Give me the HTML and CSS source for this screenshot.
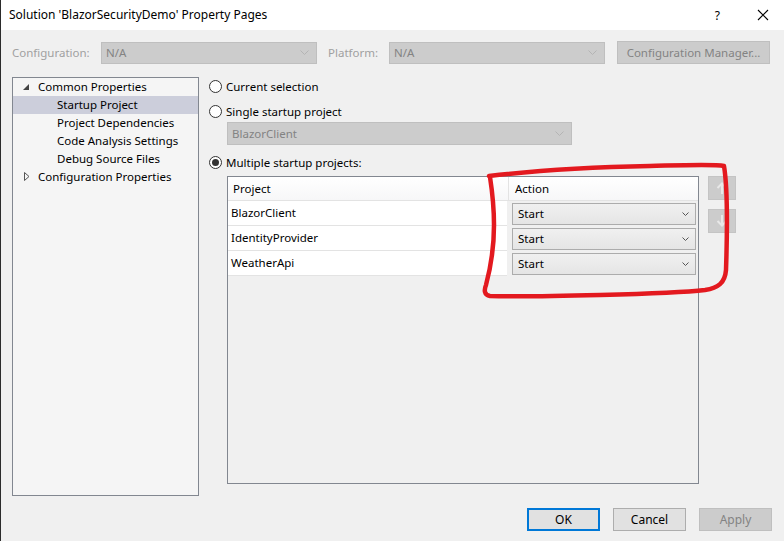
FILE: index.html
```html
<!DOCTYPE html>
<html>
<head>
<meta charset="utf-8">
<title>Property Pages</title>
<link rel="stylesheet" href="styles.css">
</head>
<body>
<div class="window">
  <div class="titlebar">
    <span class="title">Solution 'BlazorSecurityDemo' Property Pages</span>
    <span class="help">?</span>
    <svg class="close" width="12" height="12" viewBox="0 0 12 12"><path d="M1 1 L11 11 M11 1 L1 11" stroke="#000" stroke-width="1.1" fill="none"/></svg>
  </div>

  <div class="toprow">
    <span class="lbl lbl-config">Configuration:</span>
    <div class="combo combo-disabled combo-config"><span>N/A</span><svg class="chev" width="9" height="5" viewBox="0 0 9 5"><path d="M0.5 0.5 L4.5 4.5 L8.5 0.5" stroke="#b4b4b4" fill="none"/></svg></div>
    <span class="lbl lbl-platform">Platform:</span>
    <div class="combo combo-disabled combo-config"><span>N/A</span><svg class="chev" width="9" height="5" viewBox="0 0 9 5"><path d="M0.5 0.5 L4.5 4.5 L8.5 0.5" stroke="#b4b4b4" fill="none"/></svg></div>
    <div class="btn btn-disabled btn-cfgmgr">Configuration Manager...</div>
  </div>

  <div class="main">
    <div class="tree">
      <div class="node lvl1"><svg class="tri" width="6" height="6" viewBox="0 0 6 6"><path d="M6 0 L6 6 L0 6 Z" fill="#444"/></svg>Common Properties</div>
      <div class="node lvl2 selected">Startup Project</div>
      <div class="node lvl2">Project Dependencies</div>
      <div class="node lvl2">Code Analysis Settings</div>
      <div class="node lvl2">Debug Source Files</div>
      <div class="node lvl1 collapsed"><svg class="tri" width="6" height="9" viewBox="0 0 6 9"><path d="M0.5 0.5 L5 4.5 L0.5 8.5 Z" fill="none" stroke="#555"/></svg>Configuration Properties</div>
    </div>

    <div class="content">
      <div class="radio-row r1"><span class="radio"></span>Current selection</div>
      <div class="radio-row r2"><span class="radio"></span>Single startup project</div>
      <div class="combo combo-disabled combo-single"><span>BlazorClient</span><svg class="chev" width="9" height="5" viewBox="0 0 9 5"><path d="M0.5 0.5 L4.5 4.5 L8.5 0.5" stroke="#b4b4b4" fill="none"/></svg></div>
      <div class="radio-row r3"><span class="radio checked"></span>Multiple startup projects:</div>

      <div class="grid-row">
        <div class="table">
          <div class="thead">
            <div class="th th-project">Project</div>
            <div class="th th-action">Action</div>
          </div>
          <div class="tr">
            <div class="td td-project">BlazorClient</div>
            <div class="td td-action"><div class="combo combo-action"><span>Start</span><svg class="chev" width="7" height="4" viewBox="0 0 7 4"><path d="M0.5 0.5 L3.5 3.5 L6.5 0.5" stroke="#555" fill="none"/></svg></div></div>
          </div>
          <div class="tr">
            <div class="td td-project">IdentityProvider</div>
            <div class="td td-action"><div class="combo combo-action"><span>Start</span><svg class="chev" width="7" height="4" viewBox="0 0 7 4"><path d="M0.5 0.5 L3.5 3.5 L6.5 0.5" stroke="#555" fill="none"/></svg></div></div>
          </div>
          <div class="tr">
            <div class="td td-project">WeatherApi</div>
            <div class="td td-action"><div class="combo combo-action"><span>Start</span><svg class="chev" width="7" height="4" viewBox="0 0 7 4"><path d="M0.5 0.5 L3.5 3.5 L6.5 0.5" stroke="#555" fill="none"/></svg></div></div>
          </div>
        </div>
        <div class="movers">
          <div class="mover"><svg width="12" height="14" viewBox="0 0 12 14"><path d="M6 2.5 L6 13 M1.5 7 L6 2.5 L10.5 7" stroke="#e8e8e8" stroke-width="2" fill="none"/></svg></div>
          <div class="mover"><svg width="12" height="14" viewBox="0 0 12 14"><path d="M6 1 L6 11.5 M1.5 7 L6 11.5 L10.5 7" stroke="#e8e8e8" stroke-width="2" fill="none"/></svg></div>
        </div>
      </div>
    </div>
  </div>

  <div class="footer">
    <div class="btn btn-ok">OK</div>
    <div class="btn btn-normal">Cancel</div>
    <div class="btn btn-disabled">Apply</div>
  </div>

  <svg class="annotation" width="784" height="541" viewBox="0 0 784 541">
    <path d="M489 176 C 540 170, 600 167, 650 166 C 690 165, 715 164, 724 166 C 728 190, 727 240, 726 270 C 725 283, 718 288, 705 290 C 680 293, 640 294, 600 295 C 560 296, 520 297, 490 296 C 484 295, 484 290, 486 285 C 490 270, 494 250, 494 225 C 494 205, 492 190, 490 177"
      stroke="#e3191f" stroke-width="4.5" fill="none" stroke-linecap="round" stroke-linejoin="round"/>
  </svg>
</div>
</body>
</html>
```

FILE: styles.css
```css
* { box-sizing: border-box; }

html, body {
  margin: 0;
  padding: 0;
}

body {
  width: 784px;
  height: 541px;
  overflow: hidden;
  background: #f0f0f0;
  font-family: "Noto Sans", "Open Sans", sans-serif;
  font-size: 11.5px;
  color: #000;
}

.window {
  position: relative;
  width: 784px;
  height: 541px;
  border-left: 1px solid #2b2b2b;
  background: #f0f0f0;
}

.titlebar {
  height: 30px;
  background: #fff;
  display: flex;
  align-items: center;
  padding-left: 8px;
  padding-right: 15px;
}

.title {
  flex: 1;
  font-size: 12px;
  padding-bottom: 1px;
}

.help {
  font-size: 12px;
  margin-right: 37px;
}

.close {
  display: block;
}

/* top row */
.toprow {
  display: flex;
  align-items: center;
  margin-top: 11px;
  height: 23px;
}

.lbl {
  color: #a0a0a0;
  padding-bottom: 1px;
}

.lbl-config {
  width: 100px;
  padding-left: 11px;
}

.lbl-platform {
  width: 72px;
  padding-left: 11px;
}

.combo {
  display: flex;
  align-items: center;
  justify-content: space-between;
}

.combo span {
  padding-bottom: 1px;
}

.combo-disabled {
  background: #cccccc;
  border: 1px solid #bfbfbf;
  color: #838383;
  padding: 0 7px 0 4px;
}

.combo-config {
  width: 216px;
  height: 22px;
}

.btn {
  display: flex;
  align-items: center;
  justify-content: center;
  height: 23px;
  padding-bottom: 1px;
}

.btn-disabled {
  background: #cccccc;
  border: 1px solid #bfbfbf;
  color: #838383;
}

.btn-cfgmgr {
  width: 153px;
  margin-left: 12px;
}

/* main */
.main {
  display: flex;
  margin-top: 13px;
  padding-left: 11px;
}

.tree {
  width: 187px;
  height: 419px;
  border: 1px solid #828790;
  background: #f5f5f5;
}

.node {
  height: 18px;
  display: flex;
  align-items: center;
  position: relative;
  padding-bottom: 2px;
}

.lvl1 {
  padding-left: 25px;
}

.lvl2 {
  padding-left: 44px;
}

.tri {
  position: absolute;
  left: 10px;
  top: 6px;
}

.collapsed .tri {
  left: 11px;
  top: 4px;
}

.selected {
  background: #cccedb;
}

.content {
  margin-left: 9px;
  padding-top: 1px;
  display: flex;
  flex-direction: column;
}

.radio-row {
  height: 16px;
  display: flex;
  align-items: center;
}

.r2 { margin-top: 9px; }
.r3 { margin-top: 9px; }

.radio {
  width: 13px;
  height: 13px;
  border: 1px solid #333;
  border-radius: 50%;
  background: #fff;
  margin-right: 4px;
  margin-left: 1px;
  display: flex;
  align-items: center;
  justify-content: center;
}

.radio.checked::after {
  content: "";
  width: 7px;
  height: 7px;
  border-radius: 50%;
  background: #333;
}

.combo-single {
  width: 345px;
  height: 23px;
  margin-top: 3px;
  margin-left: 19px;
}

.grid-row {
  display: flex;
  margin-top: 6px;
  margin-left: 19px;
}

.table {
  width: 472px;
  height: 308px;
  border: 1px solid #828790;
  background: #f0f0f0;
}

.thead {
  display: flex;
  height: 24px;
  background: linear-gradient(#ffffff, #f7f7f8);
  border-bottom: 1px solid #e3e3e3;
}

.th {
  display: flex;
  align-items: center;
  padding-bottom: 1px;
}

.th-project {
  width: 281px;
  padding-left: 5px;
  border-right: 1px solid #e3e3e3;
}

.th-action {
  padding-left: 6px;
  flex: 1;
}

.tr {
  display: flex;
  height: 25px;
}

.td {
  display: flex;
  align-items: center;
}

.td-project {
  width: 279px;
  padding-left: 3px;
  padding-bottom: 1px;
  background: #fff;
  border-bottom: 1px solid #e3e3e3;
  margin-right: 2px;
}

.td-action {
  flex: 1;
  padding: 1px 2px 1px 3px;
}

.combo-action {
  width: 100%;
  height: 22px;
  border: 1px solid #acacac;
  background: linear-gradient(#f0f0f0, #e5e5e5);
  padding: 0 6px 0 5px;
}

.movers {
  margin-left: 9px;
  display: flex;
  flex-direction: column;
  gap: 9px;
}

.mover {
  width: 28px;
  height: 24px;
  background: #cccccc;
  border: 1px solid #c4c4c4;
  display: flex;
  align-items: center;
  justify-content: center;
}

/* footer */
.footer {
  display: flex;
  justify-content: flex-end;
  gap: 13px;
  margin-top: 12px;
  padding-right: 12px;
}

.footer .btn {
  width: 73px;
  font-size: 12px;
}

.btn-ok {
  background: #e1e1e1;
  border: 2px solid #0078d7;
}

.btn-normal {
  background: #e1e1e1;
  border: 1px solid #adadad;
}

.annotation {
  position: absolute;
  left: -1px;
  top: 0;
  pointer-events: none;
}
```
